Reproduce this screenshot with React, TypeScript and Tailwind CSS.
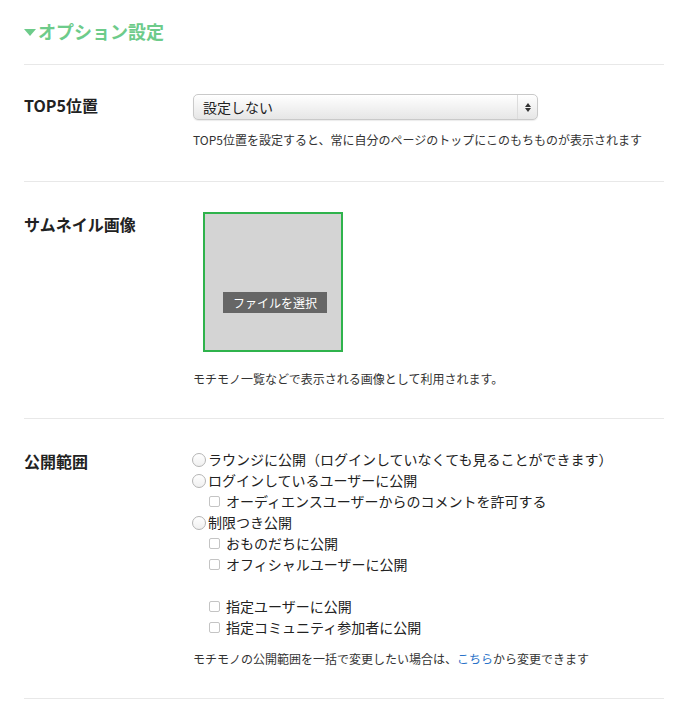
import React from "react";

const font = { fontFamily: '"Noto Sans CJK JP", "Noto Sans", sans-serif' };

function Radio() {
  return <span className="inline-block w-[14px] h-[14px] rounded-full border border-[#b5b5b5] bg-gradient-to-b from-white to-[#f0f0f0] shrink-0" />;
}
function Check() {
  return <span className="inline-block w-[11px] h-[11px] rounded-[2px] border border-[#c4c4c4] bg-white shrink-0" />;
}

export default function App() {
  return (
    <div className="w-[678px] h-[704px] bg-white text-[#222] overflow-hidden" style={font}>
      <div className="pl-[24px] pr-[14px]">
        <div className="h-[65px] flex items-center border-b border-[#e8e8e8]">
          <div className="flex items-center mt-[-2px]">
            <span className="w-0 h-0 border-l-[6px] border-r-[6px] border-t-[7px] border-l-transparent border-r-transparent border-t-[#6dcb8a] mt-[3px]" />
            <span className="ml-[2px] text-[18px] font-bold text-[#6dcb8a] leading-none">オプション設定</span>
          </div>
        </div>

        {/* TOP5 */}
        <div className="flex h-[117px] border-b border-[#e8e8e8] pt-[29px]">
          <div className="w-[169px] text-[16px] font-bold leading-[20px] mt-[1px]">TOP5位置</div>
          <div className="flex flex-col">
            <div className="w-[345px] h-[26px] rounded-[5px] border border-[#c9c9c9] bg-gradient-to-b from-white to-[#e6e6e6] shadow-[inset_0_1px_0_#fff,0_1px_1px_rgba(0,0,0,0.08)] flex items-center relative">
              <span className="pl-[9px] text-[14px] leading-none">設定しない</span>
              <div className="absolute right-0 top-0 bottom-0 w-[20px] border-l border-[#dcdcdc] flex flex-col items-center justify-center gap-[1px]">
                <span className="w-0 h-0 border-l-[3px] border-r-[3px] border-b-[4px] border-l-transparent border-r-transparent border-b-[#333]" />
                <span className="w-0 h-0 border-l-[3px] border-r-[3px] border-t-[4px] border-l-transparent border-r-transparent border-t-[#333]" />
              </div>
            </div>
            <div className="mt-[12px] text-[12px] leading-[16px] text-[#333]">TOP5位置を設定すると、常に自分のページのトップにこのもちものが表示されます</div>
          </div>
        </div>

        {/* Thumbnail */}
        <div className="flex h-[237px] border-b border-[#e8e8e8] pt-[30px]">
          <div className="w-[169px] text-[16px] font-bold leading-[20px] mt-[2px]">サムネイル画像</div>
          <div className="flex flex-col">
            <div className="ml-[10px] w-[140px] h-[140px] border-2 border-[#2fb34c] bg-[#d4d4d4] flex flex-col items-center pt-[78px]">
              <div className="w-[104px] h-[21px] bg-[#666] text-white text-[12px] flex items-center justify-center ml-[4px]">ファイルを選択</div>
            </div>
            <div className="mt-[19px] text-[12px] leading-[16px] text-[#333]">モチモノ一覧などで表示される画像として利用されます。</div>
          </div>
        </div>

        {/* Visibility */}
        <div className="flex h-[280px] border-b border-[#e8e8e8] pt-[30px]">
          <div className="w-[168px] text-[16px] font-bold leading-[20px] mt-[2px]">公開範囲</div>
          <div className="flex flex-col text-[14px] leading-[21px]">
            <div className="flex items-center gap-[2px]"><Radio /><span>ラウンジに公開（ログインしていなくても見ることができます）</span></div>
            <div className="flex items-center gap-[2px]"><Radio /><span>ログインしているユーザーに公開</span></div>
            <div className="flex items-center gap-[6px] pl-[17px]"><Check /><span>オーディエンスユーザーからのコメントを許可する</span></div>
            <div className="flex items-center gap-[2px]"><Radio /><span>制限つき公開</span></div>
            <div className="flex items-center gap-[6px] pl-[17px]"><Check /><span>おものだちに公開</span></div>
            <div className="flex items-center gap-[6px] pl-[17px]"><Check /><span>オフィシャルユーザーに公開</span></div>
            <div className="h-[21px]" />
            <div className="flex items-center gap-[6px] pl-[17px]"><Check /><span>指定ユーザーに公開</span></div>
            <div className="flex items-center gap-[6px] pl-[17px]"><Check /><span>指定コミュニティ参加者に公開</span></div>
            <div className="mt-[13px] pl-[1px] text-[12px] leading-[16px] text-[#333]">モチモノの公開範囲を一括で変更したい場合は、<span className="text-[#2a73c9]">こちら</span>から変更できます</div>
          </div>
        </div>
      </div>
    </div>
  );
}
